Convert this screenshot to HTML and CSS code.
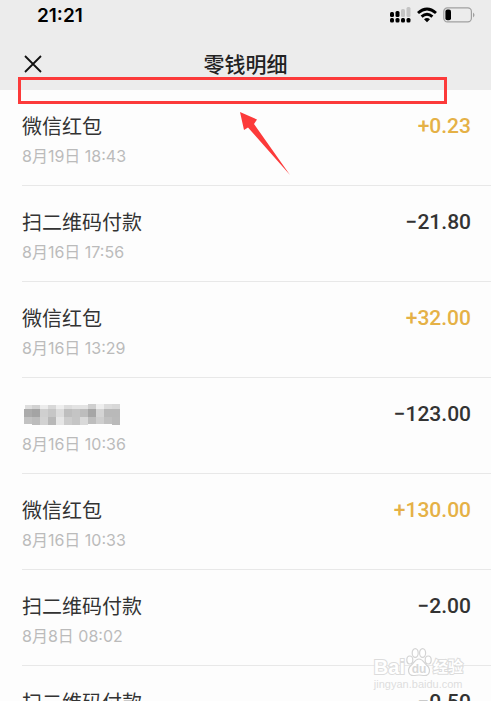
FILE: index.html
```html
<!DOCTYPE html>
<html lang="zh-CN">
<head>
    <meta charset="UTF-8">
    <meta name="viewport" content="width=device-width, initial-scale=1.0">
    <title>零钱明细</title>
    <link rel="stylesheet" href="styles.css">
</head>
<body>
    <div class="screen">
        <header class="header">
            <div class="status-bar">
                <span class="time">21:21</span>
                <div class="status-icons">
                    <!-- Signal -->
                    <svg width="21" height="18" viewBox="0 0 21 18">
                        <g fill="#000">
                            <rect x="0" y="6" width="4" height="5" rx="1.5"/>
                            <rect x="5.5" y="5" width="4" height="6" rx="1.5"/>
                            <rect x="0" y="12" width="4" height="4.5" rx="1.5"/>
                            <rect x="5.5" y="12" width="4" height="4.5" rx="1.5"/>
                            <rect x="11" y="12" width="4" height="4.5" rx="1.5"/>
                            <rect x="16.5" y="12" width="4" height="4.5" rx="1.5"/>
                        </g>
                        <g fill="#c4c4c4">
                            <rect x="11" y="3" width="4" height="8" rx="1.5"/>
                            <rect x="16.5" y="1" width="4" height="10" rx="1.5"/>
                        </g>
                    </svg>
                    <!-- Wifi -->
                    <svg width="20" height="16" viewBox="0 0 20 16">
                        <path d="M1 6Q10 -2 19 6M4.6 9.6Q10 4.8 15.4 9.6" fill="none" stroke="#000" stroke-width="2.9"/>
                        <path d="M7 12.2Q10 9.6 13 12.2L10 15.2Z" fill="#000"/>
                    </svg>
                    <!-- Battery -->
                    <svg width="32" height="16" viewBox="0 0 32 16">
                        <rect x="0.8" y="0.9" width="27.6" height="14" rx="3.6" fill="none" stroke="#a0a0a0" stroke-width="1.2"/>
                        <rect x="2.4" y="2.5" width="5.6" height="10.8" rx="2" fill="#000"/>
                        <path d="M30 5.4Q33 7.9 30 10.4Z" fill="#a0a0a0"/>
                    </svg>
                </div>
            </div>
            <div class="nav">
                <button class="close" type="button" aria-label="关闭">
                    <svg width="18" height="18" viewBox="0 0 18 18">
                        <path d="M1 1L17 17M17 1L1 17" stroke="#111" stroke-width="1.8"/>
                    </svg>
                </button>
                <h1>零钱明细</h1>
            </div>
        </header>

        <ul class="list">
            <li class="row">
                <div class="info">
                    <p class="name">微信红包</p>
                    <p class="date">8月19日 18:43</p>
                </div>
                <span class="amount income">+0.23</span>
            </li>
            <li class="row">
                <div class="info">
                    <p class="name">扫二维码付款</p>
                    <p class="date">8月16日 17:56</p>
                </div>
                <span class="amount">−21.80</span>
            </li>
            <li class="row">
                <div class="info">
                    <p class="name">微信红包</p>
                    <p class="date">8月16日 13:29</p>
                </div>
                <span class="amount income">+32.00</span>
            </li>
            <li class="row">
                <div class="info">
                    <!-- Hidden name -->
                    <p class="name name-hidden">
                        <svg width="98" height="21" viewBox="0 0 98 21" shape-rendering="crispEdges">
                            <rect x="1" y="1" width="7" height="4" fill="#dedede"/>
                            <rect x="8" y="1" width="8" height="4" fill="#d2d2d2"/>
                            <rect x="16" y="1" width="8" height="4" fill="#ececec"/>
                            <rect x="24" y="1" width="8" height="4" fill="#d8d8d8"/>
                            <rect x="32" y="1" width="8" height="4" fill="#eeeeee"/>
                            <rect x="40" y="1" width="8" height="4" fill="#dddddd"/>
                            <rect x="48" y="1" width="16" height="4" fill="#e3e3e3"/>
                            <rect x="64" y="0" width="8" height="5" fill="#cfcfcf"/>
                            <rect x="72" y="0" width="8" height="5" fill="#eeeeee"/>
                            <rect x="80" y="0" width="8" height="5" fill="#dcdcdc"/>
                            <rect x="88" y="0" width="8" height="5" fill="#d8d8d8"/>
                            <rect x="0" y="5" width="8" height="8" fill="#ababab"/>
                            <rect x="8" y="5" width="8" height="8" fill="#a4a4a4"/>
                            <rect x="16" y="5" width="8" height="8" fill="#cfcfcf"/>
                            <rect x="24" y="5" width="8" height="8" fill="#c6c6c6"/>
                            <rect x="32" y="5" width="8" height="8" fill="#dcdcdc"/>
                            <rect x="40" y="5" width="8" height="8" fill="#bebebe"/>
                            <rect x="48" y="5" width="8" height="8" fill="#c4c4c4"/>
                            <rect x="56" y="5" width="8" height="8" fill="#bdbdbd"/>
                            <rect x="64" y="5" width="8" height="8" fill="#a6a6a6"/>
                            <rect x="72" y="5" width="8" height="8" fill="#d4d4d4"/>
                            <rect x="80" y="5" width="16" height="8" fill="#b9b9b9"/>
                            <rect x="0" y="13" width="8" height="7" fill="#c2c2c2"/>
                            <rect x="8" y="13" width="8" height="8" fill="#bcbcbc"/>
                            <rect x="16" y="13" width="8" height="8" fill="#d2d2d2"/>
                            <rect x="24" y="13" width="8" height="8" fill="#b8b8b8"/>
                            <rect x="32" y="13" width="8" height="8" fill="#e6e6e6"/>
                            <rect x="40" y="13" width="8" height="8" fill="#cccccc"/>
                            <rect x="48" y="13" width="8" height="8" fill="#c5c5c5"/>
                            <rect x="56" y="13" width="8" height="8" fill="#d9d9d9"/>
                            <rect x="64" y="13" width="8" height="7" fill="#bdbdbd"/>
                            <rect x="72" y="13" width="8" height="7" fill="#cecece"/>
                            <rect x="80" y="13" width="8" height="7" fill="#c0c0c0"/>
                            <rect x="88" y="13" width="8" height="8" fill="#bababa"/>
                        </svg>
                    </p>
                    <p class="date">8月16日 10:36</p>
                </div>
                <span class="amount">−123.00</span>
            </li>
            <li class="row">
                <div class="info">
                    <p class="name">微信红包</p>
                    <p class="date">8月16日 10:33</p>
                </div>
                <span class="amount income">+130.00</span>
            </li>
            <li class="row">
                <div class="info">
                    <p class="name">扫二维码付款</p>
                    <p class="date">8月8日 08:02</p>
                </div>
                <span class="amount">−2.00</span>
            </li>
            <li class="row">
                <div class="info">
                    <p class="name">扫二维码付款</p>
                </div>
                <span class="amount">−0.50</span>
            </li>
        </ul>

        <!-- Highlight over the list top -->
        <div class="mark-box"></div>
        <svg class="mark-arrow" width="52" height="66" viewBox="0 0 52 66">
            <path d="M0 0L17 7.5L14 12L50 63L8 15.5L4 18Z" fill="#fc3a3a"/>
        </svg>

        <div class="watermark">
            <div class="brand">
                <span class="brand-text">Bai</span>
                <svg width="26" height="30" viewBox="0 0 26 30">
                    <g fill="#fff" stroke="#d4d4d4" stroke-width="1.2">
                        <ellipse cx="3.8" cy="13" rx="3" ry="4"/>
                        <ellipse cx="9.2" cy="6" rx="3" ry="4.4"/>
                        <ellipse cx="16.6" cy="6" rx="3" ry="4.4"/>
                        <ellipse cx="22.2" cy="13" rx="3" ry="4"/>
                        <path d="M13 12C17 12 18 16 21 18.5C25 22 24 28.5 18.5 28.5C16 28.5 15 28 13 28C11 28 10 28.5 7.5 28.5C2 28.5 1 22 5 18.5C8 16 9 12 13 12Z"/>
                    </g>
                    <text class="du" x="13" y="26" text-anchor="middle">du</text>
                </svg>
                <span class="brand-text brand-cn">经验</span>
            </div>
            <div class="site">jingyan.baidu.com</div>
        </div>
    </div>
</body>
</html>
```

FILE: styles.css
```css
* {
    box-sizing: border-box;
}

body {
    margin: 0;
    background-color: #fdfdfd;
    color: #333;
    font-family: Inter, "Noto Sans CJK SC", sans-serif;
}

h1, p, ul {
    margin: 0;
    padding: 0;
}

svg {
    display: block;
}

.screen {
    position: relative;
    height: 100vh;
    overflow: hidden;
}

.header {
    background-color: #ececec;
}

.status-bar {
    display: flex;
    justify-content: space-between;
    align-items: center;
    height: 30px;
    padding: 0 16px 0 37px;
}

.time {
    font-size: 19px;
    font-weight: 600;
    color: #000;
}

.status-icons {
    display: flex;
    align-items: center;
    gap: 6px;
}

.nav {
    display: grid;
    grid-template-columns: 48px 1fr 48px;
    align-items: center;
    height: 60px;
    padding-top: 8px;
}

.close {
    justify-self: end;
    padding: 0;
    margin-right: 6px;
    border: none;
    background: none;
    cursor: pointer;
}

.nav h1 {
    padding-top: 2px;
    text-align: center;
    font-size: 21px;
    font-weight: 500;
    line-height: 30px;
    color: #222;
}

.list {
    list-style: none;
}

.row {
    display: flex;
    justify-content: space-between;
    align-items: flex-start;
    height: 96px;
    margin-left: 22px;
    padding: 21px 20px 0 0;
    border-bottom: 1px solid #e8e8e8;
}

.name {
    height: 31px;
    font-size: 20px;
    line-height: 32px;
}

.name-hidden {
    display: flex;
    align-items: center;
    padding-left: 2px;
}

.date {
    font-size: 16px;
    line-height: 28px;
    color: #bbb;
}

.amount {
    font-family: Roboto, sans-serif;
    font-size: 21px;
    font-weight: 500;
    line-height: 30px;
}

.income {
    color: #e5b146;
}

.mark-box {
    position: absolute;
    top: 77px;
    left: 18px;
    right: 44px;
    height: 27px;
    border: 3px solid #fc3a3a;
}

.mark-arrow {
    position: absolute;
    top: 112px;
    left: 240px;
}

.watermark {
    position: absolute;
    right: 28px;
    bottom: 10px;
    color: #fff;
    font-family: "Liberation Sans", "Noto Sans CJK SC", sans-serif;
}

.brand {
    display: flex;
    align-items: flex-end;
    gap: 1px;
    font-size: 20px;
    font-weight: bold;
    line-height: 20px;
}

.brand-text {
    -webkit-text-stroke: 2px #dcdcdc;
    paint-order: stroke fill;
}

.brand-cn {
    font-size: 15px;
}

.du {
    font-size: 12px;
    font-weight: bold;
    fill: #d8d8d8;
}

.site {
    font-size: 11px;
    line-height: 14px;
    color: #dedede;
}
```
